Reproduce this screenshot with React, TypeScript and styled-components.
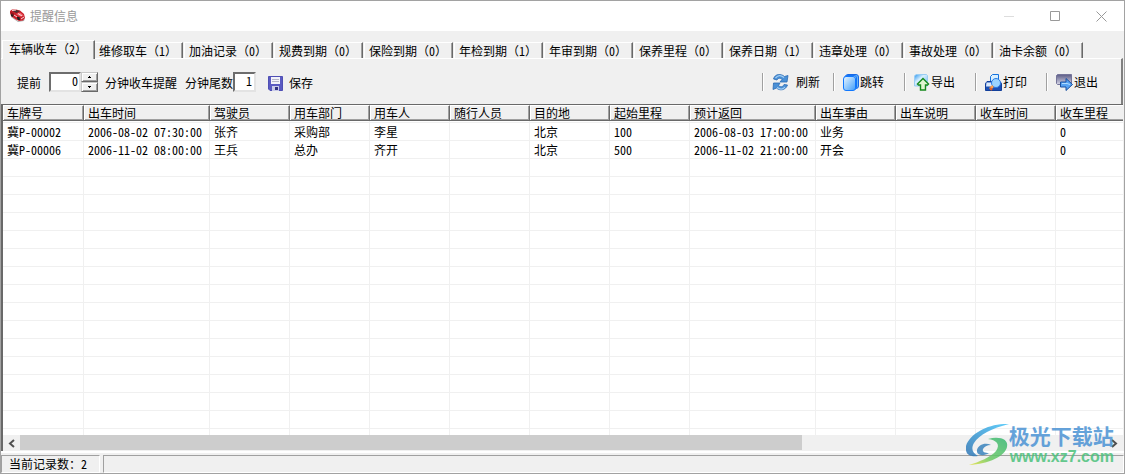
import React from "react";
import styled, { createGlobalStyle, css } from "styled-components";

const GlobalStyle = createGlobalStyle`
  *, *::before, *::after { box-sizing: border-box; }
  body {
    margin: 0;
    background: #f0f0f0;
    color: #000;
    font: 12px/16px "Noto Sans CJK SC", "Liberation Sans", sans-serif;
  }
  button, input { font: inherit; color: inherit; margin: 0; border-radius: 0; }
`;

const Latin = styled.span`
  font-feature-settings: "hwid";
`;

/* Sets ASCII characters in their half-width forms beside full-width ones. */
function Mixed({ children }: { children: string }) {
  return (
    <>
      {children.split(/([\x20-\x7e]+)/).map((part, i) =>
        i % 2 ? <Latin key={i}>{part}</Latin> : part
      )}
    </>
  );
}

const Window = styled.div`
  position: relative;
  display: flex;
  flex-direction: column;
  min-height: 100vh;
  background: #f0f0f0;
  border: 1px solid #a2a2a2;
  overflow: hidden;
`;

const TitleBar = styled.header`
  display: flex;
  align-items: center;
  height: 30px;
  padding-left: 8px;
  background: #fff;
  color: #999;
`;

const Title = styled.h1`
  flex: 1;
  margin: 0 0 0 4px;
  font-size: 12px;
  font-weight: 400;
`;

const Caption = styled.button`
  display: flex;
  align-items: center;
  justify-content: center;
  width: 46px;
  height: 28px;
  padding: 0;
  border: 0;
  background: none;
`;

const TabList = styled.div`
  display: flex;
  align-items: flex-end;
  gap: 1px;
  height: 27px;
  padding-left: 1px;
`;

const Tab = styled.button<{ $active?: boolean }>`
  flex: none;
  width: 89px;
  height: 16px;
  padding: 0 0 0 4px;
  line-height: 15px;
  text-align: left;
  white-space: nowrap;
  background: #f0f0f0;
  border: 1px solid #fff;
  border-right-color: #696969;
  border-bottom: 0;
  box-shadow: inset -1px 0 #a0a0a0;
  ${(p) =>
    p.$active &&
    css`
      position: relative;
      z-index: 1;
      width: 93px;
      height: 19px;
      margin: 0 -2px -1px 0;
      padding: 0 0 4px 6px;
    `}
`;

const ToolBar = styled.div`
  display: flex;
  align-items: center;
  height: 46px;
  margin-right: 1px;
  padding: 3px 4px 0 16px;
  border-top: 1px solid #fff;
  border-right: 2px solid #808080;
`;

const Field = styled.div`
  display: flex;
  align-items: center;
  margin-right: 8px;
  white-space: nowrap;
`;

const NumberBox = styled.input<{ $wide?: boolean }>`
  width: ${(p) => (p.$wide ? 32 : 23)}px;
  height: 20px;
  margin: 0 0 3px ${(p) => (p.$wide ? 8 : 0)}px;
  padding: 0 ${(p) => (p.$wide ? 1 : 2)}px 2px 0;
  text-align: right;
  font-feature-settings: "hwid";
  background: #fff;
  border: 2px solid;
  border-color: #6d6d6d #e3e3e3 #e3e3e3 #6d6d6d;
  outline: 0;
`;

const Spinner = styled.div`
  display: flex;
  flex-direction: column;
  width: 17px;
  margin: 0 7px 3px 0;
`;

const SpinButton = styled.button`
  display: flex;
  align-items: center;
  justify-content: center;
  height: 10px;
  padding: 0;
  background: #f0f0f0;
  border: 1px solid;
  border-color: #c8c8c8 #696969 #696969 #c8c8c8;
  box-shadow: inset 1px 1px #fff, inset -1px -1px #a0a0a0;
`;

const SaveButton = styled.button`
  display: flex;
  align-items: center;
  gap: 6px;
  margin-left: 4px;
  padding: 0;
  border: 0;
  background: none;
`;

const Actions = styled.div`
  display: flex;
  margin: 0 0 2px auto;
`;

const Action = styled.button<{ $gap?: number }>`
  display: flex;
  align-items: center;
  gap: ${(p) => p.$gap ?? 1}px;
  width: 71px;
  height: 18px;
  padding: 0 0 0 9px;
  white-space: nowrap;
  background: none;
  border: 0;
  border-left: 1px solid #a0a0a0;
  box-shadow: inset 1px 0 #fff;
  svg { flex: none; }
`;

const GridPanel = styled.main`
  flex: 1;
  display: flex;
  flex-direction: column;
  margin-right: 1px;
  background: #fff;
  border: solid #696969;
  border-width: 1px 0 0 2px;
`;

const GridView = styled.div`
  flex: 1;
  overflow: hidden;
`;

const Grid = styled.table`
  table-layout: fixed;
  width: 1133px;
  border-collapse: separate;
  border-spacing: 0;
`;

const HeadCell = styled.th`
  height: 16px;
  padding: 0 0 0 4px;
  text-align: left;
  font-weight: 400;
  line-height: 14px;
  white-space: nowrap;
  background: #f0f0f0;
  border-top: 1px solid #fff;
  border-right: 1px solid #696969;
  border-bottom: 1px solid #696969;
  box-shadow: inset 1px 0 #fff, inset -1px -1px #a0a0a0;
`;

const Row = styled.tr<{ $tail?: boolean }>`
  height: ${(p) => (p.$tail ? 6 : 18)}px;
`;

const Lead = styled.tr`
  height: 2px;
`;

const Cell = styled.td`
  padding: 0 0 0 4px;
  line-height: 14px;
  white-space: nowrap;
  border-right: 1px solid #f0f0f0;
  border-bottom: 1px solid #f0f0f0;
  ${Row}:last-child & { border-bottom: 0; }
`;

const ScrollBar = styled.div`
  display: flex;
  height: 16px;
  background: #f0f0f0;
`;

const ScrollButton = styled.button`
  display: flex;
  align-items: center;
  justify-content: center;
  width: 17px;
  padding: 0;
  border: 0;
  background: none;
`;

const Track = styled.div`
  flex: 1;
`;

const Thumb = styled.div`
  width: 72%;
  height: 15px;
  background: #cdcdcd;
`;

const StatusBar = styled.footer`
  display: flex;
  gap: 3px;
  height: 22px;
  padding-top: 2px;
  border-top: 2px solid #fff;
  background: #f0f0f0;
`;

const StatusCell = styled.div<{ $fill?: boolean }>`
  ${(p) => (p.$fill ? "flex: 1;" : "width: 99px;")}
  padding-left: 7px;
  line-height: 16px;
  border: 1px solid;
  border-color: #a0a0a0 #fff #fff #a0a0a0;
`;

const Watermark = styled.div`
  position: absolute;
  right: 10px;
  bottom: 7px;
  display: flex;
  align-items: center;
  opacity: 0.85;
  pointer-events: none;
`;

const MarkText = styled.div`
  display: flex;
  flex-direction: column;
  white-space: nowrap;
`;

const MarkName = styled.span`
  color: #4b93d4;
  font-size: 21px;
  line-height: 24px;
  font-weight: 700;
`;

const MarkSite = styled.span`
  color: #4cc27c;
  padding-left: 1px;
  font: 700 16px/19px "Liberation Sans", sans-serif;
`;

const CarIcon = () => (
  <svg width="17" height="16" viewBox="0 0 17 16">
    <path d="M2 9 9 14l6-1 1-3-2 2-5 1-7-5z" fill="#777" opacity=".6" />
    <path d="M1 3 3 1.500h4l4 1 4 3.500 1 4-2 2.500-4 .5-4-2-4-3-1-3z" fill="#c8202a" />
    <path d="m3.500 3 3.500-1 4 1-3.500 2z" fill="#4a3033" />
    <path d="m7 6 4-1.500 4 3-4 1z" fill="#f0626a" />
    <path d="m1.500 4 3 1 1.500 2.500-1 1-3-2z" fill="#8f161e" />
    <path d="m7.500 9 3 0 .5 3-2 0zM2 6l2 1v2L2 8z" fill="#222" />
    <path d="m3 2.500 4-.5M9 5.500l4 2.500M12 11l3-2M5 7l3 2" stroke="#fbd6d8" />
  </svg>
);

const SaveIcon = () => (
  <svg width="15" height="15" viewBox="0 0 15 15">
    <path d="M.5.5h14v14H2L.5 13z" fill="#5a5ac2" stroke="#4f4fb4" />
    <path d="M3 1h9v7H3z" fill="#f3f3fa" />
    <path d="M4 3.500h7M4 5.500h7" stroke="#b5b5c8" />
    <path d="M4 10h7v5H4z" fill="#c9cbe8" />
    <path d="M7 11h3v3H7z" fill="#30307f" />
  </svg>
);

const RefreshIcon = () => (
  <svg width="17" height="17" viewBox="0 0 17 17">
    <g fill="#4a90d6" stroke="#2a69b4" strokeWidth=".8" strokeLinejoin="round">
      <path d="M1.500 5C3-.5 9-.5 12.500 2.500L16 1.500 15 8H8l2-2.500C8.500 3.500 6 4 5 6z" />
      <path d="M15.500 11c-2 5.500-8 6-11 3L1 15.500 1.500 9H8l-1.500 2.500c2 2 4.500 1.500 5.500-1z" />
    </g>
    <path d="M3.500 4C6 1 9 1 12 3.500M13 13c-2 2.500-5 2.500-8 .5" fill="none" stroke="#a5d0f5" strokeWidth="1.200" />
  </svg>
);

const JumpIcon = () => (
  <svg width="16" height="17" viewBox="0 0 16 17">
    <defs>
      <linearGradient id="jump" x1="0" y1="0" x2="1" y2="1">
        <stop offset="0" stopColor="#eaf7ff" />
        <stop offset="1" stopColor="#3f9dfa" />
      </linearGradient>
    </defs>
    <rect x="2.500" y=".5" width="13" height="14" rx="2.500" fill="#66b4f5" stroke="#1769e6" />
    <rect x="1.500" y="1.500" width="12" height="14" rx="2.500" fill="#9ad1fb" stroke="#1673f4" />
    <rect x=".5" y="2.500" width="12" height="14" rx="2.500" fill="url(#jump)" stroke="#1178fe" />
  </svg>
);

const ExportIcon = () => (
  <svg width="16" height="17" viewBox="0 0 16 17">
    <defs>
      <linearGradient id="sheet" x1="0" y1="0" x2="1" y2="1">
        <stop offset="0" stopColor="#2a94ee" />
        <stop offset=".4" stopColor="#d8f0ff" />
        <stop offset="1" stopColor="#61b3f2" />
      </linearGradient>
    </defs>
    <path d="M2 .5h10.500l1 1V12H.5V2z" fill="url(#sheet)" stroke="#9acdf3" />
    <path d="M9 4.500 14.500 10l-1 1H11.500v5h-5v-5H4.500l-1-1z" fill="#dff6cf" stroke="#16891c" strokeWidth="1.400" />
  </svg>
);

const PrintIcon = () => (
  <svg width="17" height="17" viewBox="0 0 17 17">
    <path d="M5.500 8V2.500l2-2h6V8z" fill="#d9f0ff" stroke="#1573df" />
    <path d="M.5 9.500 2 7.500h13l1.500 2v7H.5z" fill="#1c50b4" stroke="#123f9b" />
    <path d="M1.500 8.500H7v4H1z" fill="#dbe9fb" />
    <circle cx="11" cy="9" r="4.500" fill="#9ad4ff" stroke="#2a79e3" />
    <path d="m8 12-3 3" stroke="#ffa34d" strokeWidth="2.500" />
    <path d="m5 14 2 2" stroke="#dc5e2b" strokeWidth="2" />
  </svg>
);

const ExitIcon = () => (
  <svg width="17" height="17" viewBox="0 0 17 17">
    <defs>
      <linearGradient id="screen" x1="0" y1="0" x2="0" y2="1">
        <stop offset="0" stopColor="#5c5c86" />
        <stop offset="1" stopColor="#d7d7e8" />
      </linearGradient>
    </defs>
    <path d="M1.500.5h14v10h-14l-1-1v-8z" fill="url(#screen)" stroke="#75759a" />
    <path d="M4.500 8H10V4.500l6.500 6L10 16.500V13H4.500z" fill="#57a2f2" stroke="#1a4f9f" />
    <path d="M6 9.500h5l3 1" fill="none" stroke="#b0dcff" />
  </svg>
);

const Swirl = () => (
  <svg width="43" height="41" viewBox="0 0 43 41">
    <defs>
      <linearGradient id="sky" x1="1" y1="0" x2="0" y2="1">
        <stop offset="0" stopColor="#45c5fa" />
        <stop offset="1" stopColor="#2f74b3" />
      </linearGradient>
      <linearGradient id="leaf" x1="1" y1="0" x2="0" y2="1">
        <stop offset="0" stopColor="#35b774" />
        <stop offset=".6" stopColor="#6ac965" />
        <stop offset="1" stopColor="#e9e33c" />
      </linearGradient>
    </defs>
    <path d="M43 0C24-1 4 9 0 22c-1 8 3 11 12 10-6-3-7-8-4-13C13 11 26 4 43 0z" fill="url(#sky)" />
    <path d="M25 21c-6-3-13 0-14 5-1 5 6 7 12 3-4 0-7-1-6-4 1-2 4-4 8-4z" fill="#3b83bd" />
    <path d="M22 15c11-3 21 0 19 8-2 9-18 17-38 18 10-3 22-8 27-14 5-7 0-11-8-12z" fill="url(#leaf)" />
  </svg>
);

const Chevron = ({ d }: { d: string }) => (
  <svg width="7" height="9" viewBox="0 0 7 9">
    <path d={d} fill="none" stroke="#505050" strokeWidth="2" />
  </svg>
);

const tabs: [string, number][] = [
  ["车辆收车", 2], ["维修取车", 1], ["加油记录", 0], ["规费到期", 0],
  ["保险到期", 0], ["年检到期", 1], ["年审到期", 0], ["保养里程", 0],
  ["保养日期", 1], ["违章处理", 0], ["事故处理", 0], ["油卡余额", 0],
];

const columns: [string, number][] = [
  ["车牌号", 81], ["出车时间", 126], ["驾驶员", 80], ["用车部门", 80],
  ["用车人", 80], ["随行人员", 80], ["目的地", 80], ["起始里程", 80],
  ["预计返回", 126], ["出车事由", 80], ["出车说明", 80], ["收车时间", 80],
  ["收车里程", 80],
];

const records = [
  ["冀P-00002", "2006-08-02 07:30:00", "张齐", "采购部", "李星", "", "北京", "100", "2006-08-03 17:00:00", "业务", "", "", "0"],
  ["冀P-00006", "2006-11-02 08:00:00", "王兵", "总办", "齐开", "", "北京", "500", "2006-11-02 21:00:00", "开会", "", "", "0"],
];

const EMPTY_ROWS = 15;

export default function App() {
  return (
    <Window>
      <GlobalStyle />
      <TitleBar>
        <CarIcon />
        <Title>提醒信息</Title>
        <Caption aria-label="最小化">
          <svg width="10" height="10"><path d="M0 5.500h10" stroke="#ddd" /></svg>
        </Caption>
        <Caption aria-label="最大化">
          <svg width="10" height="10"><path d="M.5.5h9v9h-9z" fill="none" stroke="#999" /></svg>
        </Caption>
        <Caption aria-label="关闭">
          <svg width="11" height="11"><path d="m.5.5 10 10m0-10-10 10" stroke="#999" /></svg>
        </Caption>
      </TitleBar>

      <TabList role="tablist">
        {tabs.map(([name, count], i) => (
          <Tab key={name} role="tab" aria-selected={i === 0} $active={i === 0}>
            <Mixed>{`${name}（${count}）`}</Mixed>
          </Tab>
        ))}
      </TabList>

      <ToolBar>
        <Field>
          <label htmlFor="lead">提前</label>
          <NumberBox id="lead" $wide defaultValue="0" />
          <Spinner>
            <SpinButton aria-label="增加">
              <svg width="3" height="2"><path d="M1 0h1v1h1v1H0V1h1z" /></svg>
            </SpinButton>
            <SpinButton aria-label="减少">
              <svg width="3" height="2"><path d="M0 0h3v1H2v1H1V1H0z" /></svg>
            </SpinButton>
          </Spinner>
          <label htmlFor="lead">分钟收车提醒</label>
        </Field>
        <Field>
          <label htmlFor="tail">分钟尾数</label>
          <NumberBox id="tail" defaultValue="1" />
        </Field>
        <SaveButton><SaveIcon />保存</SaveButton>
        <Actions>
          <Action $gap={7}><RefreshIcon />刷新</Action>
          <Action><JumpIcon />跳转</Action>
          <Action><ExportIcon />导出</Action>
          <Action><PrintIcon />打印</Action>
          <Action><ExitIcon />退出</Action>
        </Actions>
      </ToolBar>

      <GridPanel>
        <GridView>
          <Grid>
            <colgroup>
              {columns.map(([name, width]) => <col key={name} width={width} />)}
            </colgroup>
            <thead>
              <tr>
                {columns.map(([name]) => <HeadCell key={name} scope="col">{name}</HeadCell>)}
              </tr>
            </thead>
            <tbody>
              <Lead>{columns.map(([name]) => <Cell key={name} />)}</Lead>
              {records.map((record) => (
                <Row key={record[0]}>
                  {record.map((value, i) => <Cell key={i}><Mixed>{value}</Mixed></Cell>)}
                </Row>
              ))}
              {Array.from({ length: EMPTY_ROWS + 1 }, (_, r) => (
                <Row key={r} $tail={r === EMPTY_ROWS}>
                  {columns.map(([name]) => <Cell key={name} />)}
                </Row>
              ))}
            </tbody>
          </Grid>
        </GridView>
        <ScrollBar>
          <ScrollButton aria-label="向左滚动"><Chevron d="M6 1 2 4.500 6 8" /></ScrollButton>
          <Track><Thumb /></Track>
          <ScrollButton aria-label="向右滚动"><Chevron d="m1 1 4 3.500L1 8" /></ScrollButton>
        </ScrollBar>
      </GridPanel>

      <StatusBar>
        <StatusCell><Mixed>当前记录数：2</Mixed></StatusCell>
        <StatusCell $fill />
      </StatusBar>

      <Watermark>
        <Swirl />
        <MarkText>
          <MarkName>极光下载站</MarkName>
          <MarkSite>www.xz7.com</MarkSite>
        </MarkText>
      </Watermark>
    </Window>
  );
}
